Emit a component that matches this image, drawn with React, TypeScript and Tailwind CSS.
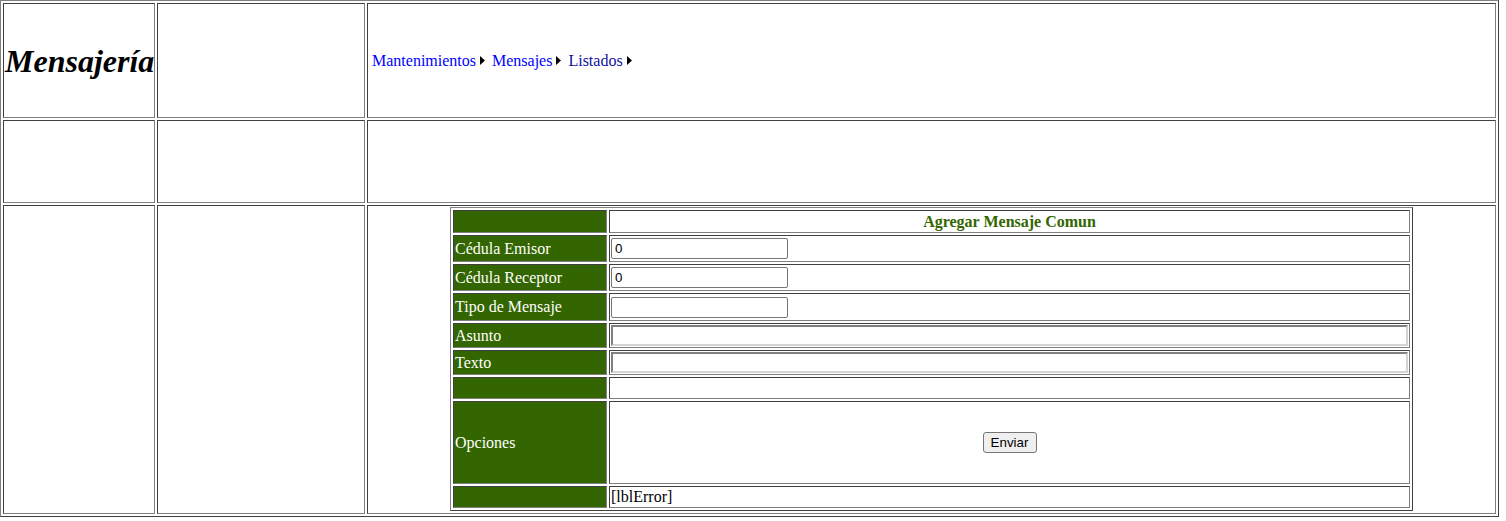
import React from 'react';

const outerBorder =
  'border border-solid border-t-[#808080] border-l-[#808080] border-r-[#404040] border-b-[#404040]';
const cellBorder =
  'border border-solid border-t-[#404040] border-l-[#404040] border-r-[#808080] border-b-[#808080] p-px';
const label = `${cellBorder} bg-[#336600] text-white`;
const value = cellBorder;

function Arrow() {
  return (
    <svg width="5" height="9" viewBox="0 0 5 9" className="ml-[4px] shrink-0">
      <polygon points="0,0 5,4.5 0,9" fill="#000" />
    </svg>
  );
}

function Crumb({ text, color, last }: { text: string; color: string; last?: boolean }) {
  return (
    <span className={`inline-flex items-center ${last ? '' : 'mr-[7px]'}`}>
      <a href="#" className={color}>
        {text}
      </a>
      <Arrow />
    </span>
  );
}

const smallInput =
  "w-[177px] h-[21px] border border-solid border-[#767676] rounded-[2px] px-[3px] text-[13.33px] font-['Liberation_Sans',Arial,sans-serif] text-black bg-white align-middle outline-none";
const wideInput =
  "w-full h-[21px] border-2 border-solid border-t-[#808080] border-l-[#808080] border-r-[#d4d4d4] border-b-[#d4d4d4] px-[2px] text-[13.33px] font-['Liberation_Sans',Arial,sans-serif] bg-white block outline-none";

export default function App() {
  return (
    <div className="bg-white text-black font-['Liberation_Serif','Times_New_Roman',serif] text-[16px] leading-[18px]">
      <table className={`border-separate border-spacing-[2px] table-fixed w-[1499px] ${outerBorder}`}>
        <colgroup>
          <col className="w-[152px]" />
          <col className="w-[208px]" />
          <col />
        </colgroup>
        <tbody>
          <tr className="h-[115px]">
            <td className={cellBorder}>
              <h1 className="text-[32px] leading-[36px] font-bold italic">Mensajería</h1>
            </td>
            <td className={cellBorder}></td>
            <td className={`${cellBorder} pl-[4px]`}>
              <div className="flex items-center">
                <Crumb text="Mantenimientos" color="text-[#0000ff]" />
                <Crumb text="Mensajes" color="text-[#0000ff]" />
                <Crumb text="Listados" color="text-[#1111a0]" last />
              </div>
            </td>
          </tr>
          <tr className="h-[83px]">
            <td className={cellBorder}></td>
            <td className={cellBorder}></td>
            <td className={cellBorder}></td>
          </tr>
          <tr className="h-[309px]">
            <td className={cellBorder}></td>
            <td className={cellBorder}></td>
            <td className={`${cellBorder} align-top`}>
              <table className={`mx-auto border-separate border-spacing-[2px] table-fixed w-[963px] ${outerBorder}`}>
                <colgroup>
                  <col className="w-[154px]" />
                  <col />
                </colgroup>
                <tbody>
                  <tr className="h-[23px]">
                    <td className={label}></td>
                    <td className={`${value} text-center font-bold text-[#336600]`}>Agregar Mensaje Comun</td>
                  </tr>
                  <tr className="h-[27px]">
                    <td className={label}>Cédula Emisor</td>
                    <td className={value}>
                      <input className={smallInput} defaultValue="0" />
                    </td>
                  </tr>
                  <tr className="h-[27px]">
                    <td className={label}>Cédula Receptor</td>
                    <td className={value}>
                      <input className={smallInput} defaultValue="0" />
                    </td>
                  </tr>
                  <tr className="h-[28px]">
                    <td className={label}>Tipo de Mensaje</td>
                    <td className={value}>
                      <input className={smallInput} />
                    </td>
                  </tr>
                  <tr className="h-[25px]">
                    <td className={label}>Asunto</td>
                    <td className={value}>
                      <input className={wideInput} />
                    </td>
                  </tr>
                  <tr className="h-[25px]">
                    <td className={label}>Texto</td>
                    <td className={value}>
                      <input className={wideInput} />
                    </td>
                  </tr>
                  <tr className="h-[22px]">
                    <td className={label}></td>
                    <td className={value}></td>
                  </tr>
                  <tr className="h-[83px]">
                    <td className={label}>Opciones</td>
                    <td className={`${value} text-center`}>
                      <button className="h-[21px] w-[54px] bg-[#efefef] border border-solid border-[#767676] rounded-[3px] text-[13.33px] leading-none font-['Liberation_Sans',Arial,sans-serif] text-black align-middle">
                        Enviar
                      </button>
                    </td>
                  </tr>
                  <tr className="h-[22px]">
                    <td className={label}></td>
                    <td className={value}>[lblError]</td>
                  </tr>
                </tbody>
              </table>
            </td>
          </tr>
        </tbody>
      </table>
    </div>
  );
}
